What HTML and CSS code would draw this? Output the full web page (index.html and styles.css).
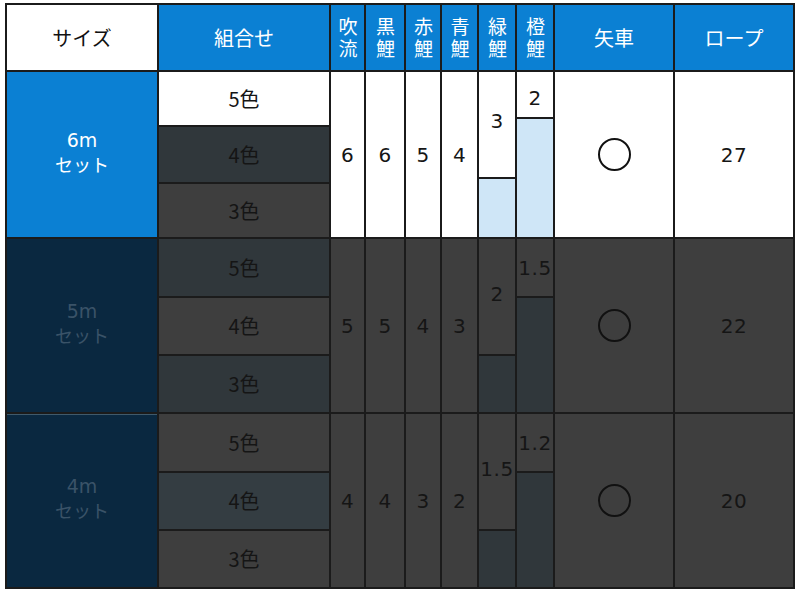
FILE: index.html
```html
<!DOCTYPE html>
<html lang="ja">
<head>
<meta charset="utf-8">
<title>セット表</title>
<link rel="stylesheet" href="styles.css">
</head>
<body>
<div class="table">
  <div class="cell head-white c1">サイズ</div>
  <div class="cell head c2">組合せ</div>
  <div class="cell head"><span class="vtext">吹流</span></div>
  <div class="cell head"><span class="vtext">黒鯉</span></div>
  <div class="cell head"><span class="vtext">赤鯉</span></div>
  <div class="cell head"><span class="vtext">青鯉</span></div>
  <div class="cell head"><span class="vtext">緑鯉</span></div>
  <div class="cell head"><span class="vtext">橙鯉</span></div>
  <div class="cell head">矢車</div>
  <div class="cell head">ロープ</div>

  <!-- 6m -->
  <div class="cell size blue r2 span3"><span class="sz">6m</span><span class="set">セット</span></div>
  <div class="cell white r2 c2">5色</div>
  <div class="cell bluedark r3 c2">4色</div>
  <div class="cell gray r4 c2">3色</div>
  <div class="cell white num r2 span3 c3">6</div>
  <div class="cell white num r2 span3 c4">6</div>
  <div class="cell white num r2 span3 c5">5</div>
  <div class="cell white num r2 span3 c6">4</div>
  <div class="split r2 span3 c7">
    <div class="cell white num green-top">3</div>
    <div class="cell light fill"></div>
  </div>
  <div class="split r2 span3 c8">
    <div class="cell white num orange-top">2</div>
    <div class="cell light fill"></div>
  </div>
  <div class="cell white r2 span3 c9"><span class="ring"></span></div>
  <div class="cell white num r2 span3 c10">27</div>

  <!-- 5m -->
  <div class="cell size navy r5 span3"><span class="sz">5m</span><span class="set">セット</span></div>
  <div class="cell bluedark r5 c2">5色</div>
  <div class="cell gray r6 c2">4色</div>
  <div class="cell bluedark r7 c2">3色</div>
  <div class="cell gray num r5 span3 c3">5</div>
  <div class="cell gray num r5 span3 c4">5</div>
  <div class="cell gray num r5 span3 c5">4</div>
  <div class="cell gray num r5 span3 c6">3</div>
  <div class="cell gray num r5 span2 c7 up">2</div>
  <div class="cell bluedark r7 c7"></div>
  <div class="cell gray num r5 c8">1.5</div>
  <div class="cell bluedark r6 span2 c8"></div>
  <div class="cell gray r5 span3 c9"><span class="ring"></span></div>
  <div class="cell gray num r5 span3 c10">22</div>

  <!-- 4m -->
  <div class="cell size navy sep r8 span3"><span class="sz">4m</span><span class="set">セット</span></div>
  <div class="cell gray r8 c2">5色</div>
  <div class="cell bluedark2 r9 c2">4色</div>
  <div class="cell gray r10 c2">3色</div>
  <div class="cell gray num r8 span3 c3">4</div>
  <div class="cell gray num r8 span3 c4">4</div>
  <div class="cell gray num r8 span3 c5">3</div>
  <div class="cell gray num r8 span3 c6">2</div>
  <div class="cell gray num r8 span2 c7 up">1.5</div>
  <div class="cell bluedark r10 c7"></div>
  <div class="cell gray num r8 c8">1.2</div>
  <div class="cell bluedark r9 span2 c8"></div>
  <div class="cell gray r8 span3 c9"><span class="ring"></span></div>
  <div class="cell gray num r8 span3 c10">20</div>
</div>
</body>
</html>
```
FILE: styles.css
```css
html, body {
  margin: 0;
  padding: 0;
  background: #ffffff;
}
body {
  padding: 3px 0 0 5px;
  font-family: "Noto Sans CJK JP", "Noto Sans", sans-serif;
}
.table {
  display: grid;
  width: 786px;
  grid-template-columns: 150px 170px 33px 38px 34px 35px 36px 36px 118px 118px;
  grid-template-rows: 65px 53px 55px 53px 57px 56px 56px 57px 56px 56px;
  gap: 2px;
  padding: 2px;
  background: #1b1b1b;
}
.cell {
  display: flex;
  align-items: center;
  justify-content: center;
  text-align: center;
  font-size: 20px;
  line-height: 24px;
  color: #151515;
}
.head {
  background: #0b80d3;
  color: #ffffff;
  font-size: 20px;
}
.head-white {
  background: #ffffff;
  color: #111;
}
.vtext {
  writing-mode: vertical-rl;
  text-orientation: upright;
  font-size: 19px;
  line-height: 24px;
  letter-spacing: 3px;
  margin-top: 2px;
}
.c1 { grid-column: 1; }
.c2 { grid-column: 2; }
.c3 { grid-column: 3; }
.c4 { grid-column: 4; }
.c5 { grid-column: 5; }
.c6 { grid-column: 6; }
.c7 { grid-column: 7; }
.c8 { grid-column: 8; }
.c9 { grid-column: 9; }
.c10 { grid-column: 10; }
.r2 { grid-row-start: 2; }
.r3 { grid-row-start: 3; }
.r4 { grid-row-start: 4; }
.r5 { grid-row-start: 5; }
.r6 { grid-row-start: 6; }
.r7 { grid-row-start: 7; }
.r8 { grid-row-start: 8; }
.r9 { grid-row-start: 9; }
.r10 { grid-row-start: 10; }
.span2 { grid-row-end: span 2; }
.span3 { grid-row-end: span 3; }
.size {
  grid-column: 1;
  flex-direction: column;
  padding-bottom: 4px;
}
.size .sz {
  display: block;
  font-family: "DejaVu Sans", sans-serif;
  font-size: 19px;
  line-height: 22px;
}
.size .set {
  display: block;
  font-size: 18px;
  line-height: 26px;
}
.blue {
  background: #0b80d3;
  color: #ffffff;
}
.navy {
  background: #0a2840;
  color: #3a5368;
}
.sep {
  box-shadow: inset 0 1px 0 #3f5a6c;
}
.white { background: #ffffff; }
.gray { background: #3e3e3e; }
.bluedark { background: #30373b; }
.bluedark2 { background: #343d42; }
.light { background: #cfe6f7; }
.split {
  display: flex;
  flex-direction: column;
  gap: 2px;
}
.split .fill { flex: 1; }
.green-top {
  height: 105px;
  padding-bottom: 8px;
  box-sizing: border-box;
}
.orange-top {
  height: 45px;
  padding-top: 6px;
  box-sizing: border-box;
}
.num {
  font-size: 20px;
  font-family: "DejaVu Sans", "Noto Sans CJK JP", sans-serif;
  letter-spacing: 0.5px;
}
.up { padding-bottom: 6px; }
.ring {
  display: block;
  width: 29px;
  height: 29px;
  border: 2.5px solid #111;
  border-radius: 50%;
}
```
